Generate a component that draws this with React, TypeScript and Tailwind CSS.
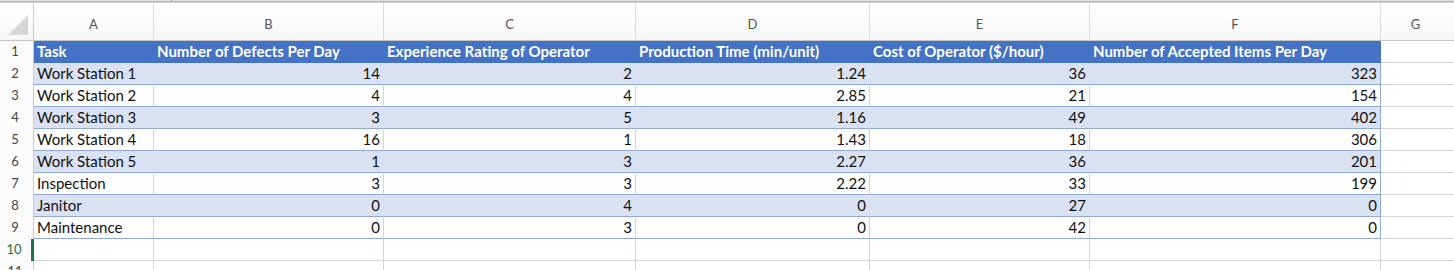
import React from 'react';
import clsx from 'clsx';

type Row = [string, number, number, string, number, number];

const rows: Row[] = [
  ['Work Station 1', 14, 2, '1.24', 36, 323],
  ['Work Station 2', 4, 4, '2.85', 21, 154],
  ['Work Station 3', 3, 5, '1.16', 49, 402],
  ['Work Station 4', 16, 1, '1.43', 18, 306],
  ['Work Station 5', 1, 3, '2.27', 36, 201],
  ['Inspection', 3, 3, '2.22', 33, 199],
  ['Janitor', 0, 4, '0', 27, 0],
  ['Maintenance', 0, 3, '0', 42, 0],
];

const headers = [
  'Task',
  'Number of Defects Per Day',
  'Experience Rating of Operator',
  'Production Time (min/unit)',
  'Cost of Operator ($/hour)',
  'Number of Accepted Items Per Day',
];

// column widths incl. the 1px right line
const colW = ['w-[120px]', 'w-[230px]', 'w-[252px]', 'w-[234px]', 'w-[220px]', 'w-[291px]'];
const letters = ['A', 'B', 'C', 'D', 'E', 'F'];

const cellFont = "font-['Lato',sans-serif] text-[15px] leading-[21px]";

const RowHead: React.FC<{ n: number; active?: boolean }> = ({ n, active }) => (
  <div
    className={clsx(
      "flex h-[22px] w-[34px] shrink-0 items-start justify-center pr-[3px] pt-[0px] font-['Lato',sans-serif] text-[13px] leading-[21px] bg-[#fbfbfb]",
      active ? 'border-r-[3px] border-[#217346] text-[#217346]' : 'border-r border-[#cbcbcb] text-[#444]'
    )}
  >
    {n}
  </div>
);

export default function App() {
  return (
    <div className="relative h-[270px] w-[1454px] overflow-hidden bg-white">
      {/* strip under the formula bar */}
      <div className="relative">
        <div className="h-px bg-[#e4e4e4]" />
        <div className="h-px bg-[#b4b4b4]" />
        <div className="h-px bg-[#d4d4d4]" />
        <div className="absolute left-[171px] top-0 h-[2px] w-px bg-[#a8a8a8]" />
      </div>

      {/* column letters */}
      <div className="flex h-[38px] border-b border-[#c6c6c6] bg-gradient-to-b from-white to-[#f6f6f6]">
        <div className="relative w-[34px] shrink-0 border-r border-[#cbcbcb]">
          <svg className="absolute left-[8px] top-[12px]" width="20" height="20" viewBox="0 0 20 20">
            <polygon points="20,0 20,20 0,20" fill="#d6d6d6" />
          </svg>
        </div>
        {letters.map((l, i) => (
          <div
            key={l}
            className={clsx(
              colW[i],
              "flex shrink-0 items-center justify-center border-r border-[#dcdcdc] pt-[6px] font-['Lato',sans-serif] text-[13px] text-[#555]"
            )}
          >
            {l}
          </div>
        ))}
        <div className="flex flex-1 items-center justify-center pr-[4px] pt-[6px] font-['Lato',sans-serif] text-[13px] text-[#555]">
          G
        </div>
      </div>

      {/* row 1: table header */}
      <div className="flex">
        <RowHead n={1} />
        {headers.map((h, i) => (
          <div
            key={h}
            className={clsx(
              colW[i],
              cellFont,
              'h-[22px] shrink-0 overflow-hidden whitespace-nowrap border-b border-[#4472c4] bg-[#4472c4] pl-[3px] font-bold text-white'
            )}
          >
            {h}
          </div>
        ))}
        <div className="h-[22px] flex-1 border-b border-[#d4d4d4]" />
      </div>

      {/* rows 2-9: data */}
      {rows.map((r, ri) => {
        const banded = ri % 2 === 0;
        return (
          <div key={ri} className="flex">
            <RowHead n={ri + 2} />
            {r.map((v, ci) => (
              <div
                key={ci}
                className={clsx(
                  colW[ci],
                  cellFont,
                  'h-[22px] shrink-0 whitespace-nowrap border-b border-r border-b-[#8eaadb] text-[#111]',
                  ci === 0 ? 'pl-[3px] text-left' : 'pr-[3px] text-right',
                  ci === 5
                    ? 'border-r-[#8eaadb]'
                    : banded
                      ? 'border-r-[#d9e1f2]'
                      : 'border-r-[#d4d4d4]',
                  banded ? 'bg-[#d9e1f2]' : 'bg-white'
                )}
              >
                {v}
              </div>
            ))}
            <div className="h-[22px] flex-1 border-b border-[#d4d4d4]" />
          </div>
        );
      })}

      {/* rows 10-11: empty */}
      {[10, 11].map((n) => (
        <div key={n} className="flex">
          <RowHead n={n} active={n === 10} />
          {colW.map((w, i) => (
            <div key={i} className={clsx(w, 'h-[22px] shrink-0 border-b border-r border-[#d4d4d4]')} />
          ))}
          <div className="h-[22px] flex-1 border-b border-[#d4d4d4]" />
        </div>
      ))}
    </div>
  );
}
